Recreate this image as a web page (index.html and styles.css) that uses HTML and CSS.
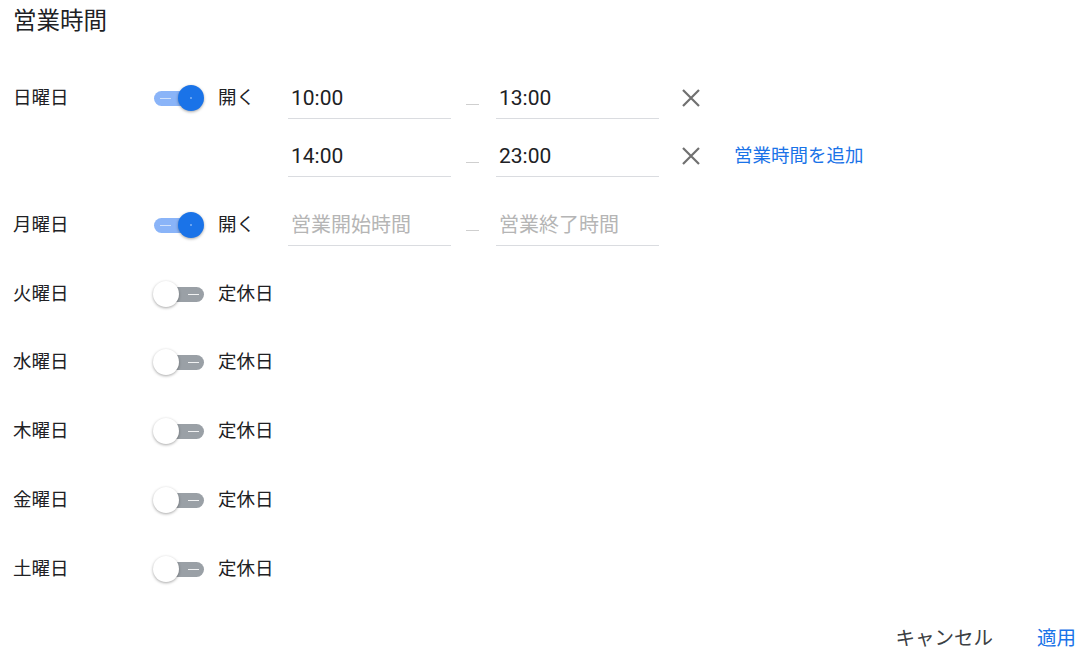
FILE: index.html
```html
<!DOCTYPE html>
<html lang="ja">
<head>
<meta charset="utf-8">
<link rel="stylesheet" href="styles.css">
</head>
<body>
<div class="page">
  <h1 class="title">営業時間</h1>

  <div class="days">
    <div class="day">
      <div class="day-name">日曜日</div>
      <div class="toggle-wrap"><div class="toggle on"><span class="track"><span class="mark"></span></span><span class="thumb"><span class="dot"></span></span></div></div>
      <div class="status">開く</div>
      <div class="slots">
        <div class="slot">
          <div class="field">10:00</div>
          <div class="sep"><span></span></div>
          <div class="field">13:00</div>
          <svg class="close" viewBox="0 0 20 20"><path d="M2 2 L18 18 M18 2 L2 18"/></svg>
        </div>
        <div class="slot">
          <div class="field">14:00</div>
          <div class="sep"><span></span></div>
          <div class="field">23:00</div>
          <svg class="close" viewBox="0 0 20 20"><path d="M2 2 L18 18 M18 2 L2 18"/></svg>
          <a class="add">営業時間を追加</a>
        </div>
      </div>
    </div>

    <div class="day">
      <div class="day-name">月曜日</div>
      <div class="toggle-wrap"><div class="toggle on"><span class="track"><span class="mark"></span></span><span class="thumb"><span class="dot"></span></span></div></div>
      <div class="status">開く</div>
      <div class="slots">
        <div class="slot">
          <div class="field placeholder">営業開始時間</div>
          <div class="sep"><span></span></div>
          <div class="field placeholder">営業終了時間</div>
        </div>
      </div>
    </div>

    <div class="day">
      <div class="day-name">火曜日</div>
      <div class="toggle-wrap"><div class="toggle off"><span class="track"><span class="mark"></span></span><span class="thumb"></span></div></div>
      <div class="status">定休日</div>
    </div>

    <div class="day">
      <div class="day-name">水曜日</div>
      <div class="toggle-wrap"><div class="toggle off"><span class="track"><span class="mark"></span></span><span class="thumb"></span></div></div>
      <div class="status">定休日</div>
    </div>

    <div class="day">
      <div class="day-name">木曜日</div>
      <div class="toggle-wrap"><div class="toggle off"><span class="track"><span class="mark"></span></span><span class="thumb"></span></div></div>
      <div class="status">定休日</div>
    </div>

    <div class="day">
      <div class="day-name">金曜日</div>
      <div class="toggle-wrap"><div class="toggle off"><span class="track"><span class="mark"></span></span><span class="thumb"></span></div></div>
      <div class="status">定休日</div>
    </div>

    <div class="day">
      <div class="day-name">土曜日</div>
      <div class="toggle-wrap"><div class="toggle off"><span class="track"><span class="mark"></span></span><span class="thumb"></span></div></div>
      <div class="status">定休日</div>
    </div>
  </div>

  <div class="footer">
    <a class="btn cancel">キャンセル</a>
    <a class="btn apply">適用</a>
  </div>
</div>
</body>
</html>
```

FILE: styles.css
```css
* { box-sizing: border-box; }

html, body {
  margin: 0;
  padding: 0;
  background: #ffffff;
}

body {
  font-family: Roboto, "Noto Sans CJK JP", sans-serif;
  color: #202124;
  width: 1088px;
  height: 661px;
  overflow: hidden;
}

.page {
  padding: 0 12px 0 13px;
}

.title {
  margin: 5px 0 32px 0;
  font-size: 23.5px;
  font-weight: 400;
  line-height: 32px;
  color: #202124;
}

.days {
  display: flex;
  flex-direction: column;
  gap: 10.8px;
}

.day {
  display: flex;
  align-items: flex-start;
}

.day-name {
  width: 140px;
  height: 58px;
  line-height: 58px;
  font-size: 18.5px;
  color: #202124;
}

.toggle-wrap {
  width: 51px;
  height: 58px;
  display: flex;
  align-items: center;
}

.toggle {
  position: relative;
  width: 51px;
  height: 26px;
}

.toggle .track {
  position: absolute;
  left: 1px;
  right: 2px;
  top: 6px;
  height: 15px;
  border-radius: 8px;
}

.toggle.on .track { background: #8ab4f8; }
.toggle.off .track { background: #9aa0a6; left: 6px; right: 0; }

.toggle .mark {
  position: absolute;
  top: 7px;
  height: 1px;
  width: 11px;
  background: rgba(255,255,255,0.85);
}

.toggle.on .mark { left: 6px; background: rgba(255,255,255,0.6); }
.toggle.off .mark { right: 5px; }

.toggle .thumb {
  position: absolute;
  top: 0;
  width: 26px;
  height: 26px;
  border-radius: 50%;
  box-shadow: 0 1px 3px rgba(0,0,0,0.35);
}

.toggle.on .thumb {
  right: 0;
  background: #1a73e8;
  display: flex;
  align-items: center;
  justify-content: center;
}

.toggle.off .thumb {
  left: 0;
  background: #ffffff;
}

.toggle .dot {
  width: 2px;
  height: 2px;
  border-radius: 50%;
  background: rgba(255,255,255,0.45);
}

.status {
  margin-left: 14px;
  width: 70px;
  height: 58px;
  line-height: 58px;
  font-size: 18.5px;
  color: #202124;
}

.slots {
  display: flex;
  flex-direction: column;
}

.slot {
  height: 58px;
  display: flex;
  align-items: center;
}

.field {
  width: 163px;
  height: 41px;
  padding-left: 3px;
  line-height: 40px;
  font-size: 21px;
  color: #202124;
  border-bottom: 1px solid #dadce0;
  align-self: flex-start;
  margin-top: 9px;
}

.field.placeholder {
  color: #b5b5b5;
  font-size: 20px;
}

.sep {
  width: 45px;
  height: 58px;
  display: flex;
  align-items: center;
  justify-content: center;
}

.sep span {
  display: block;
  width: 13px;
  height: 1px;
  background: #cfcfcf;
  margin-top: 12px;
  margin-left: -3px;
}

.close {
  width: 20px;
  height: 20px;
  margin-left: 22px;
  fill: none;
  stroke: #707070;
  stroke-width: 2.2;
}

.add {
  margin-left: 33px;
  font-size: 18.5px;
  color: #1a73e8;
  line-height: 58px;
}

.footer {
  display: flex;
  justify-content: flex-end;
  align-items: center;
  gap: 44px;
  margin-top: 27px;
  height: 28px;
}

.btn {
  font-size: 19.5px;
  line-height: 28px;
}

.cancel { color: #3c4043; }
.apply { color: #1a73e8; }
```
